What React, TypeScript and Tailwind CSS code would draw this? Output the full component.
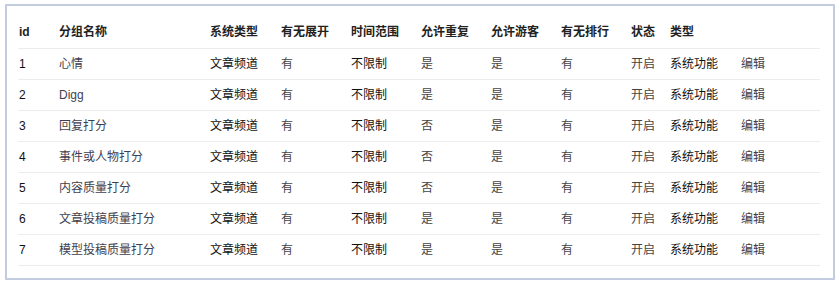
const font = { fontFamily: '"Liberation Sans", "Noto Sans CJK SC", sans-serif' }

const cols = [
  { key: 'id', label: 'id', w: 'w-[40px]' },
  { key: 'name', label: '分组名称', w: 'w-[151px]' },
  { key: 'sys', label: '系统类型', w: 'w-[71px]' },
  { key: 'expand', label: '有无展开', w: 'w-[70px]' },
  { key: 'range', label: '时间范围', w: 'w-[70px]' },
  { key: 'repeat', label: '允许重复', w: 'w-[70px]' },
  { key: 'guest', label: '允许游客', w: 'w-[70px]' },
  { key: 'rank', label: '有无排行', w: 'w-[70px]' },
  { key: 'status', label: '状态', w: 'w-[39px]' },
  { key: 'type', label: '类型', w: 'w-[71px]' },
  { key: 'edit', label: '', w: 'w-[80px]' },
]

const rows = [
  ['1', '心情', '是'],
  ['2', 'Digg', '是'],
  ['3', '回复打分', '否'],
  ['4', '事件或人物打分', '否'],
  ['5', '内容质量打分', '否'],
  ['6', '文章投稿质量打分', '是'],
  ['7', '模型投稿质量打分', '是'],
]

export default function App() {
  return (
    <div className="h-[283px] w-[840px] bg-white pl-[5px] pt-[4px]" style={font}>
      <div className="h-[276px] w-[830px] border-2 border-[#c3cbdf] px-[11px] pt-[11px]">
        <table className="w-[802px] table-fixed border-collapse text-[12px]">
          <thead>
            <tr className="h-[31px] border-b border-[#ececec]">
              {cols.map((c) => (
                <th key={c.key} className={`${c.w} pl-[1px] text-left font-bold text-[#222]`}>
                  {c.label}
                </th>
              ))}
            </tr>
          </thead>
          <tbody>
            {rows.map(([id, name, rep]) => (
              <tr key={id} className="h-[31px] border-b border-[#ececec]">
                <td className="pl-[1px] text-[#111]">{id}</td>
                <td className="pl-[1px] text-[#3f3f4f]">{name}</td>
                <td className="pl-[1px] text-[#111]">文章频道</td>
                <td className="pl-[1px] text-[#444]">有</td>
                <td className="pl-[1px] text-[#111]">不限制</td>
                <td className="pl-[1px] text-[#444]">{rep}</td>
                <td className="pl-[1px] text-[#444]">是</td>
                <td className="pl-[1px] text-[#444]">有</td>
                <td className="pl-[1px] text-[#444]">开启</td>
                <td className="pl-[1px] text-[#111]">系统功能</td>
                <td className="pl-[1px] text-[#3f3f4f]">编辑</td>
              </tr>
            ))}
          </tbody>
        </table>
      </div>
    </div>
  )
}
